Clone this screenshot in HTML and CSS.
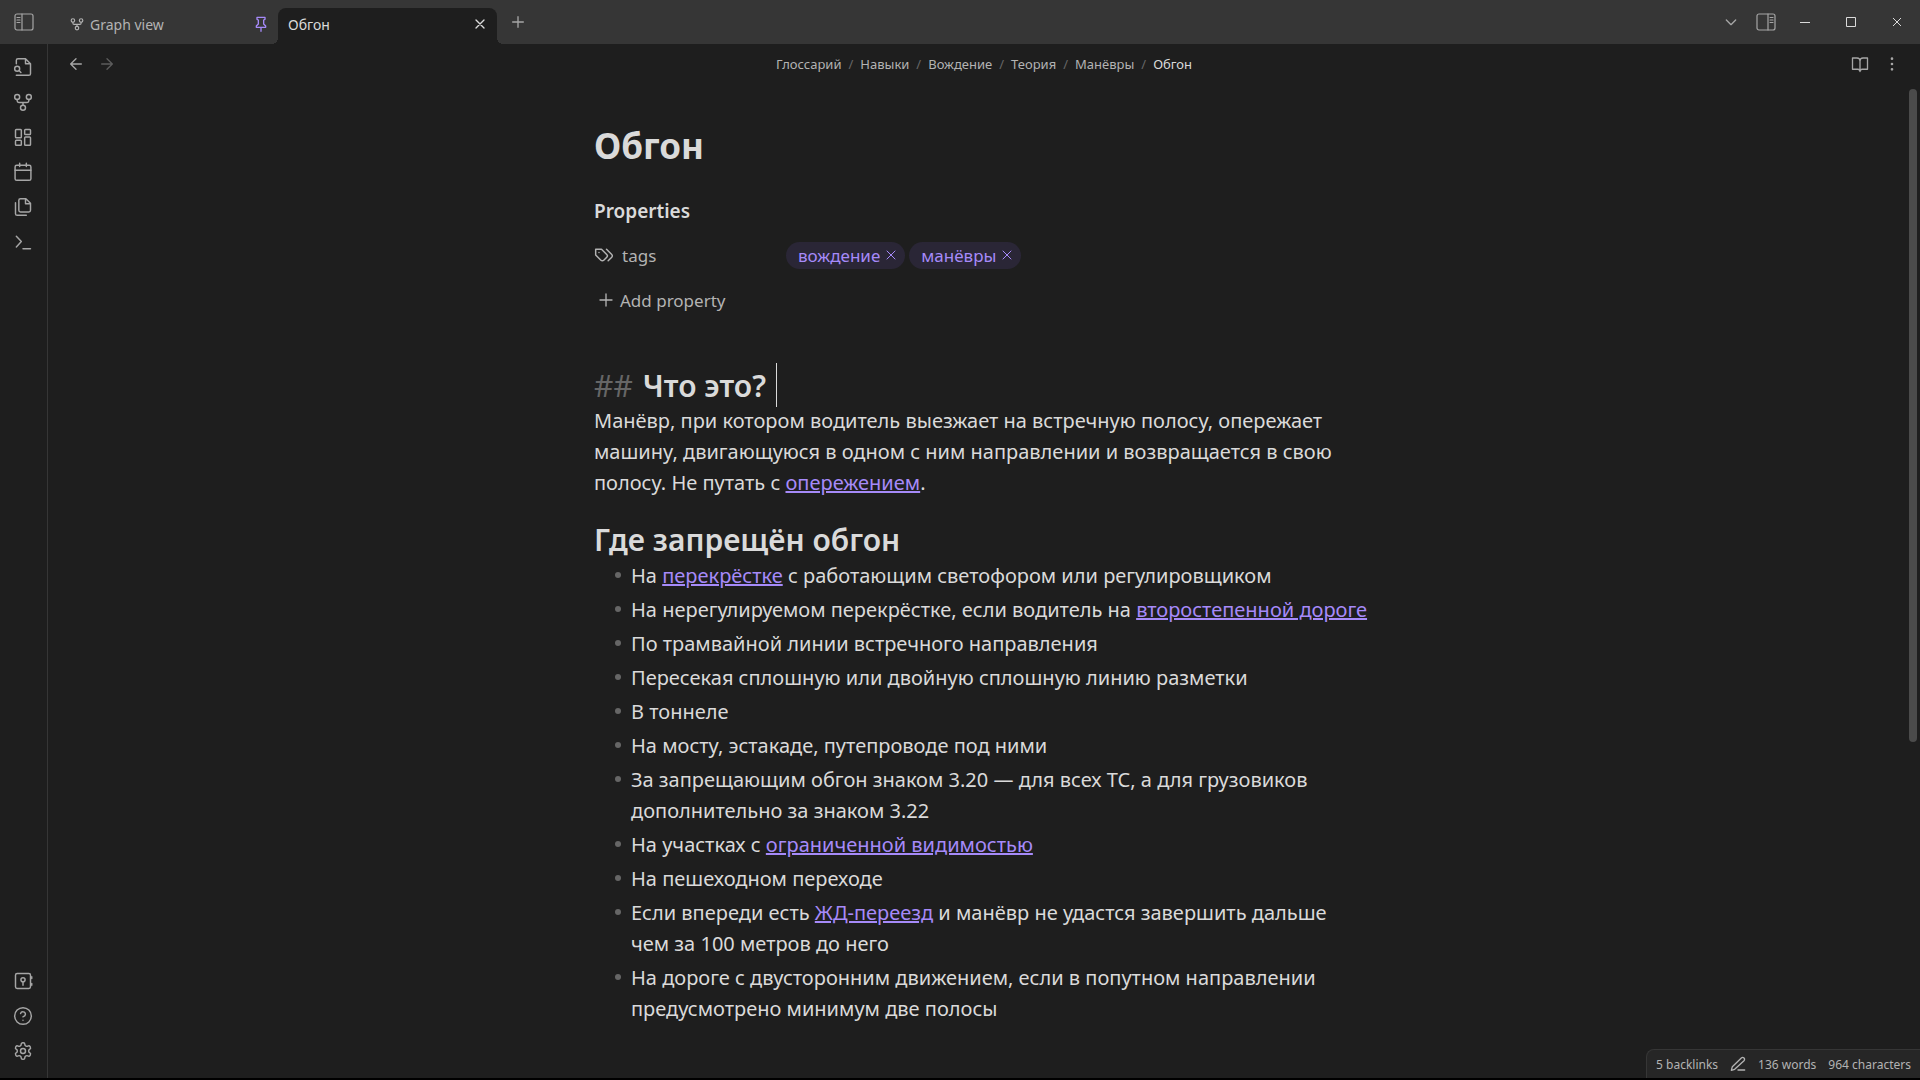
FILE: index.html
```html
<!DOCTYPE html>
<html lang="ru">
<head>
<meta charset="utf-8">
<title>Обгон</title>
<link rel="stylesheet" href="styles.css">
</head>
<body>
<div class="app">
  <header class="titlebar">
    <button class="icon-button sidebar-left" aria-label="Toggle left sidebar"><svg class="icon panel" viewBox="0 0 20 18"><rect x="1" y="1" width="18" height="16" rx="2"/><path d="M8 1v16M3 4.500h3M3 7h3M3 9.500h3"/></svg></button>
    <nav class="tabs" aria-label="Tabs">
      <div class="tab">
        <svg class="icon small" viewBox="0 0 24 24"><circle cx="12" cy="19" r="3"/><circle cx="5" cy="6" r="3"/><circle cx="19" cy="6" r="3"/><path d="M5 9v1.500a2 2 0 0 0 2 2h10a2 2 0 0 0 2-2V9M12 12.500V16"/></svg>
        <a class="tab-title" href="#graph">Graph view</a>
        <button class="icon-button pin" aria-label="Unpin"><svg class="icon medium" viewBox="0 0 24 24"><path d="M12 17v6M5 17h14v-2l-3-3V6l2-1V2H6v3l2 1v6l-3 3z"/></svg></button>
      </div>
      <div class="tab active">
        <a class="tab-title" href="#note">Обгон</a>
        <button class="icon-button close" aria-label="Close tab"><svg class="icon medium" viewBox="0 0 24 24"><path d="M18 6 6 18M6 6l12 12"/></svg></button>
      </div>
      <button class="icon-button new-tab" aria-label="New tab"><svg class="icon medium" viewBox="0 0 24 24"><path d="M12 4v16M4 12h16"/></svg></button>
    </nav>
    <div class="window-controls">
      <button class="icon-button chevron" aria-label="Tab list"><svg class="icon medium" viewBox="0 0 24 24"><path d="m5 9 7 7 7-7"/></svg></button>
      <button class="icon-button sidebar-right" aria-label="Toggle right sidebar"><svg class="icon panel" viewBox="0 0 20 18"><rect x="1" y="1" width="18" height="16" rx="2"/><path d="M12 1v16M14 4.500h3M14 7h3M14 9.500h3"/></svg></button>
      <button class="icon-button window" aria-label="Minimize"><svg class="glyph" viewBox="0 0 12 12"><path d="M1 6.500h10"/></svg></button>
      <button class="icon-button window" aria-label="Maximize"><svg class="glyph" viewBox="0 0 12 12"><path d="M1.500 1.500h9v9h-9z"/></svg></button>
      <button class="icon-button window" aria-label="Close"><svg class="glyph" viewBox="0 0 12 12"><path d="m2 2 8 8M10 2l-8 8"/></svg></button>
    </div>
  </header>
  <div class="workspace">
    <aside class="ribbon">
      <div class="ribbon-group">
        <button class="icon-button" aria-label="Quick switcher"><svg class="icon" viewBox="0 0 24 24"><path d="M4 8V4a2 2 0 0 1 2-2h9l6 6v12a2 2 0 0 1-2 2H4M15 2v6h6"/><circle cx="5" cy="14" r="3"/><path d="m7.500 16.500 2 2"/></svg></button>
        <button class="icon-button" aria-label="Graph view"><svg class="icon" viewBox="0 0 24 24"><circle cx="12" cy="19" r="3"/><circle cx="5" cy="6" r="3"/><circle cx="19" cy="6" r="3"/><path d="M5 9v1.500a2 2 0 0 0 2 2h10a2 2 0 0 0 2-2V9M12 12.500V16"/></svg></button>
        <button class="icon-button" aria-label="Canvas"><svg class="icon" viewBox="0 0 24 24"><rect x="3" y="3" width="7" height="10" rx="1"/><rect x="14" y="3" width="7" height="6" rx="1"/><rect x="14" y="12" width="7" height="10" rx="1"/><rect x="3" y="16" width="7" height="6" rx="1"/></svg></button>
        <button class="icon-button" aria-label="Daily note"><svg class="icon" viewBox="0 0 24 24"><rect x="2.500" y="4" width="19" height="18" rx="2"/><path d="M8 1.500v4M16 1.500v4M2.500 10h19"/></svg></button>
        <button class="icon-button" aria-label="Templates"><svg class="icon" viewBox="0 0 24 24"><path d="M15.500 2H9a2 2 0 0 0-2 2v12a2 2 0 0 0 2 2h10a2 2 0 0 0 2-2V7.500zM15 2v6h6"/><path d="M3 7v13a2 2 0 0 0 2 2h11"/></svg></button>
        <button class="icon-button" aria-label="Command palette"><svg class="icon" viewBox="0 0 24 24"><path d="m4 18 6-6.500L4 5M12 20h9"/></svg></button>
      </div>
      <div class="ribbon-group">
        <button class="icon-button" aria-label="Open vault"><svg class="icon" viewBox="0 0 24 24"><rect x="3" y="3" width="18" height="18" rx="2"/><circle cx="12" cy="10.500" r="2.500"/><path d="M12 13v4M22.500 7v2M22.500 15v2"/></svg></button>
        <button class="icon-button" aria-label="Help"><svg class="icon" viewBox="0 0 24 24"><circle cx="12" cy="12" r="10"/><path d="M9.090 9a3 3 0 0 1 5.830 1c0 2-3 3-3 3M12 17h.010"/></svg></button>
        <button class="icon-button" aria-label="Settings"><svg class="icon" viewBox="0 0 24 24"><path d="M12.220 2h-.44a2 2 0 0 0-2 2v.18a2 2 0 0 1-1 1.730l-.43.25a2 2 0 0 1-2 0l-.15-.08a2 2 0 0 0-2.730.73l-.22.38a2 2 0 0 0 .73 2.730l.15.1a2 2 0 0 1 1 1.720v.51a2 2 0 0 1-1 1.740l-.15.09a2 2 0 0 0-.73 2.730l.22.38a2 2 0 0 0 2.730.73l.15-.08a2 2 0 0 1 2 0l.43.25a2 2 0 0 1 1 1.730V20a2 2 0 0 0 2 2h.44a2 2 0 0 0 2-2v-.18a2 2 0 0 1 1-1.730l.43-.25a2 2 0 0 1 2 0l.15.08a2 2 0 0 0 2.730-.73l.22-.39a2 2 0 0 0-.73-2.730l-.15-.08a2 2 0 0 1-1-1.740v-.5a2 2 0 0 1 1-1.740l.15-.09a2 2 0 0 0 .73-2.730l-.22-.38a2 2 0 0 0-2.730-.73l-.15.08a2 2 0 0 1-2 0l-.43-.25a2 2 0 0 1-1-1.730V4a2 2 0 0 0-2-2z"/><circle cx="12" cy="12" r="3"/></svg></button>
      </div>
    </aside>
    <main class="pane">
      <div class="view-header">
        <div class="history">
          <button class="icon-button" aria-label="Back"><svg class="icon medium" viewBox="0 0 24 24"><path d="M20 12H4M12 4l-8 8 8 8"/></svg></button>
          <button class="icon-button dim" aria-label="Forward"><svg class="icon medium" viewBox="0 0 24 24"><path d="M4 12h16M12 4l8 8-8 8"/></svg></button>
        </div>
        <nav class="breadcrumbs" aria-label="Path">
          <a href="#1">Глоссарий</a><span>/</span><a href="#2">Навыки</a><span>/</span><a href="#3">Вождение</a><span>/</span><a href="#4">Теория</a><span>/</span><a href="#5">Манёвры</a><span>/</span><a class="current" href="#note">Обгон</a>
        </nav>
        <div class="view-actions">
          <button class="icon-button" aria-label="Reading view"><svg class="icon book" viewBox="0 0 24 24"><path d="M2 4h6a4 4 0 0 1 4 4v14a3 3 0 0 0-3-3H2zM22 4h-6a4 4 0 0 0-4 4v14a3 3 0 0 1 3-3h7z"/></svg></button>
          <button class="icon-button" aria-label="More options"><svg class="icon medium" viewBox="0 0 24 24"><circle cx="12" cy="4" r="1"/><circle cx="12" cy="12" r="1"/><circle cx="12" cy="20" r="1"/></svg></button>
        </div>
      </div>
      <div class="view-body">
        <article class="note">
          <h1>Обгон</h1>
          <section class="properties">
            <h3>Properties</h3>
            <div class="property">
              <div class="property-key"><svg class="icon" viewBox="0 0 24 24"><path d="M9 5H2v7l6.290 6.290c.94.94 2.480.94 3.420 0l3.580-3.580c.94-.94.94-2.480 0-3.420L9 5Z"/><path d="M6 9.010V9M15 5l6.300 6.300a2.400 2.400 0 0 1 0 3.400L17 19"/></svg><span>tags</span></div>
              <div class="tags">
                <span class="tag">вождение<button class="icon-button" aria-label="Remove вождение"><svg class="icon tiny" viewBox="0 0 24 24"><path d="M20 4 4 20M4 4l16 16"/></svg></button></span>
                <span class="tag">манёвры<button class="icon-button" aria-label="Remove манёвры"><svg class="icon tiny" viewBox="0 0 24 24"><path d="M20 4 4 20M4 4l16 16"/></svg></button></span>
              </div>
            </div>
            <button class="add-property"><svg class="icon medium" viewBox="0 0 24 24"><path d="M12 3v18M3 12h18"/></svg>Add property</button>
          </section>
          <h2><span class="marker">##</span> Что это? <span class="caret"></span></h2>
          <p>Манёвр, при котором водитель выезжает на встречную полосу, опережает машину, двигающуюся в одном с ним направлении и возвращается в свою полосу. Не путать с <a href="#n1">опережением</a>.</p>
          <h2 class="second">Где запрещён обгон</h2>
          <ul>
            <li>На <a href="#n2">перекрёстке</a> с работающим светофором или регулировщиком</li>
            <li>На нерегулируемом перекрёстке, если водитель на <a href="#n3">второстепенной дороге</a></li>
            <li>По трамвайной линии встречного направления</li>
            <li>Пересекая сплошную или двойную сплошную линию разметки</li>
            <li>В тоннеле</li>
            <li>На мосту, эстакаде, путепроводе под ними</li>
            <li>За запрещающим обгон знаком 3.20 — для всех ТС, а для грузовиков дополнительно за знаком 3.22</li>
            <li>На участках с <a href="#n4">ограниченной видимостью</a></li>
            <li>На пешеходном переходе</li>
            <li>Если впереди есть <a href="#n5">ЖД-переезд</a> и манёвр не удастся завершить дальше чем&nbsp;за 100 метров до него</li>
            <li>На дороге с двусторонним движением, если в попутном направлении предусмотрено минимум две полосы</li>
          </ul>
        </article>
        <div class="scrollbar"><div class="thumb"></div></div>
      </div>
      <footer class="status">
        <span>5 backlinks</span>
        <svg class="icon medium" viewBox="0 0 24 24"><path d="M12 21h10M17 3a2.500 2.500 0 0 1 4 4L7 20l-5 1.500L3.500 16z"/></svg>
        <span>136 words</span>
        <span>964 characters</span>
      </footer>
    </main>
  </div>
</div>
</body>
</html>
```
FILE: styles.css
```css
* { box-sizing: border-box; }

body {
  margin: 0;
  background: #000;
  color: #dadada;
  font-family: "Noto Sans", "Open Sans", sans-serif;
  font-size: 14px;
}

button {
  border: 0;
  padding: 0;
  background: none;
  color: inherit;
  font: inherit;
}

a { color: inherit; text-decoration: none; }

.app {
  display: flex;
  flex-direction: column;
  min-height: calc(100vh - 2px);
  background: #1e1e1e;
}

.icon, .glyph {
  display: block;
  flex: none;
  width: 20px;
  height: 20px;
  fill: none;
  stroke: currentColor;
  stroke-width: 1.75;
  stroke-linecap: round;
  stroke-linejoin: round;
}
.icon.medium { width: 16px; height: 16px; stroke-width: 2; }
.icon.small { width: 14px; height: 14px; stroke-width: 2; }
.icon.tiny { width: 12px; height: 12px; stroke-width: 2; }
.icon.panel { width: 20px; height: 18px; stroke-width: 1.2; }
.icon.book { width: 18px; height: 18px; }
.glyph { width: 12px; height: 12px; stroke-width: 1; stroke-linecap: butt; stroke-linejoin: miter; }

.icon-button {
  display: flex;
  align-items: center;
  justify-content: center;
  color: #a6a6a6;
}

.titlebar {
  display: flex;
  height: 44px;
  background: #363636;
}
.sidebar-left { width: 48px; }
.tabs { display: flex; flex: 1; padding: 8px 0 0 12px; }
.tab {
  display: flex;
  align-items: center;
  gap: 6px;
  width: 218px;
  padding: 0 9px 4px 10px;
  color: #b3b3b3;
}
.tab-title { flex: 1; }
.pin { color: #a68af9; }
.tab.active {
  position: relative;
  width: 219px;
  border-radius: 8px 8px 0 0;
  background: #1e1e1e;
  color: #dadada;
}
.close { color: #dadada; }
.tab.active::before, .tab.active::after {
  content: "";
  position: absolute;
  bottom: 0;
  width: 6px;
  height: 6px;
}
.tab.active::before { right: 100%; background: radial-gradient(circle at 0 0, transparent 6px, #1e1e1e 6px); }
.tab.active::after { left: 100%; background: radial-gradient(circle at 100% 0, transparent 6px, #1e1e1e 6px); }
.new-tab { width: 42px; padding-bottom: 8px; }
.window-controls { display: flex; }
.chevron { width: 37px; }
.sidebar-right { width: 33px; }
.window { width: 46px; color: #dadada; }

.workspace { display: flex; flex: 1; }
.ribbon {
  display: flex;
  flex-direction: column;
  justify-content: space-between;
  width: 48px;
  padding: 5px 0 10px;
  border-right: 1px solid #363636;
}
.ribbon .icon-button { width: 46px; height: 35px; }

.pane { display: flex; flex: 1; flex-direction: column; position: relative; min-width: 0; }
.view-header {
  display: flex;
  align-items: center;
  height: 40px;
  padding: 0 20px;
}
.history, .view-actions { display: flex; gap: 15px; flex: 1; }
.view-actions { justify-content: flex-end; }
.icon-button.dim { color: #5c5c5c; }
.breadcrumbs { display: flex; gap: 7px; color: #b3b3b3; font-size: 13px; }
.breadcrumbs span { color: #666; }
.breadcrumbs .current { color: #dadada; }

.view-body { display: flex; flex: 1; padding-left: 7px; }
.note {
  flex: 0 1 776px;
  margin: 0 auto;
  padding-top: 34px;
  font-size: 20px;
  line-height: 31px;
}
h1 { margin: 0; font-size: 35px; line-height: 56px; font-weight: 700; }
h3 { margin: 21px 0 12px; font-size: 19px; line-height: 32px; font-weight: 600; }
.properties { color: #b3b3b3; font-size: 17px; }
.properties h3 { color: #dadada; }
.property { display: flex; align-items: center; height: 32px; }
.property-key { display: flex; align-items: center; gap: 8px; width: 192px; }
.tags { display: flex; gap: 4px; }
.tag {
  display: flex;
  align-items: center;
  gap: 5px;
  height: 27px;
  padding: 0 8px 0 12px;
  border-radius: 14px;
  background: #2a2636;
  color: #a68af9;
}
.tag .icon-button { color: #a68af9; }
.add-property { display: flex; align-items: center; gap: 6px; height: 32px; margin-top: 13px; padding-left: 4px; }

h2 { display: flex; gap: 10px; margin: 51px 0 0; font-size: 30px; line-height: 38px; font-weight: 600; }
h2.second { margin-top: 23px; }
.marker { color: #666; font-weight: 400; }
.caret { width: 1px; margin: -4px 0 -2px; background: #dadada; }
p { margin: 0; }
p a, li a { color: #a68af9; text-decoration: underline; text-decoration-thickness: 2px; }
ul { margin: 1px 0 0; padding: 0 0 0 37px; list-style: none; }
li { position: relative; padding-bottom: 3px; }
li::before {
  content: "";
  position: absolute;
  left: -16px;
  top: 12px;
  width: 6px;
  height: 6px;
  border-radius: 50%;
  background: #666;
}

.scrollbar { width: 11px; padding-top: 5px; }
.thumb { width: 8px; height: 66%; border-radius: 4px; background: #4b4b4b; }

.status {
  position: absolute;
  right: 0;
  bottom: 0;
  display: flex;
  align-items: center;
  gap: 12px;
  height: 29px;
  padding: 0 9px;
  border: 1px solid #363636;
  border-width: 1px 0 0 1px;
  border-radius: 8px 0 0 0;
  background: #262626;
  color: #b3b3b3;
  font-size: 12px;
}
```
